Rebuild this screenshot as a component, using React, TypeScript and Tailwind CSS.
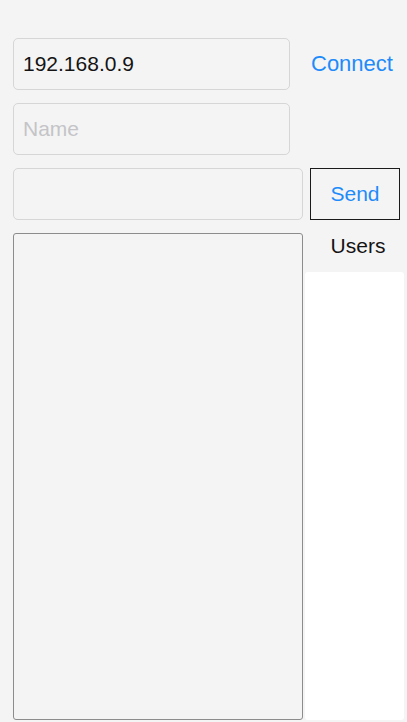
import { useState } from "react";

export default function App() {
    const [host, setHost] = useState("192.168.0.9");
    const [name, setName] = useState("");
    const [message, setMessage] = useState("");

    return (
        <div
            className="w-[407px] h-[722px] bg-[#f4f4f4] overflow-hidden pt-[38px] pl-[13px] flex flex-col gap-[13px]"
            style={{ fontFamily: '"Liberation Sans", Arial, sans-serif' }}
        >
            {/* Host row */}
            <div className="flex items-center h-[52px]">
                <input
                    value={host}
                    onChange={(e) => setHost(e.target.value)}
                    className="w-[277px] h-[52px] px-[9px] bg-[#f4f4f4] border border-[#d6d6d6] rounded-[5px] text-[21px] text-[#141414] outline-none"
                />
                <button className="ml-[21px] text-[22px] text-[#1e8bfb] leading-none">Connect</button>
            </div>

            {/* Name row */}
            <div className="flex h-[52px]">
                <input
                    value={name}
                    onChange={(e) => setName(e.target.value)}
                    placeholder="Name"
                    className="w-[277px] h-[52px] px-[9px] bg-[#f4f4f4] border border-[#d6d6d6] rounded-[5px] text-[21px] text-[#141414] placeholder:text-[#c4c4c8] outline-none"
                />
            </div>

            {/* Message row */}
            <div className="flex h-[52px] gap-[7px]">
                <input
                    value={message}
                    onChange={(e) => setMessage(e.target.value)}
                    className="w-[290px] h-[52px] px-[9px] bg-[#f4f4f4] border border-[#d6d6d6] rounded-[5px] text-[21px] text-[#141414] outline-none"
                />
                <button className="w-[90px] h-[52px] border border-[#1a1a1a] text-[21px] text-[#1e8bfb]">
                    Send
                </button>
            </div>

            {/* Chat log + users */}
            <div className="flex gap-[2px]">
                <div className="w-[290px] h-[487px] border border-[#8c8c8c] rounded-[3px] bg-[#f4f4f4]" />
                <div className="w-[99px] flex flex-col">
                    <div className="h-[39px] pt-[2px] pl-[7px] flex justify-center text-[21px] leading-none text-[#141414]">
                        Users
                    </div>
                    <div className="h-[448px] bg-white rounded-[3px]" />
                </div>
            </div>
        </div>
    );
}
